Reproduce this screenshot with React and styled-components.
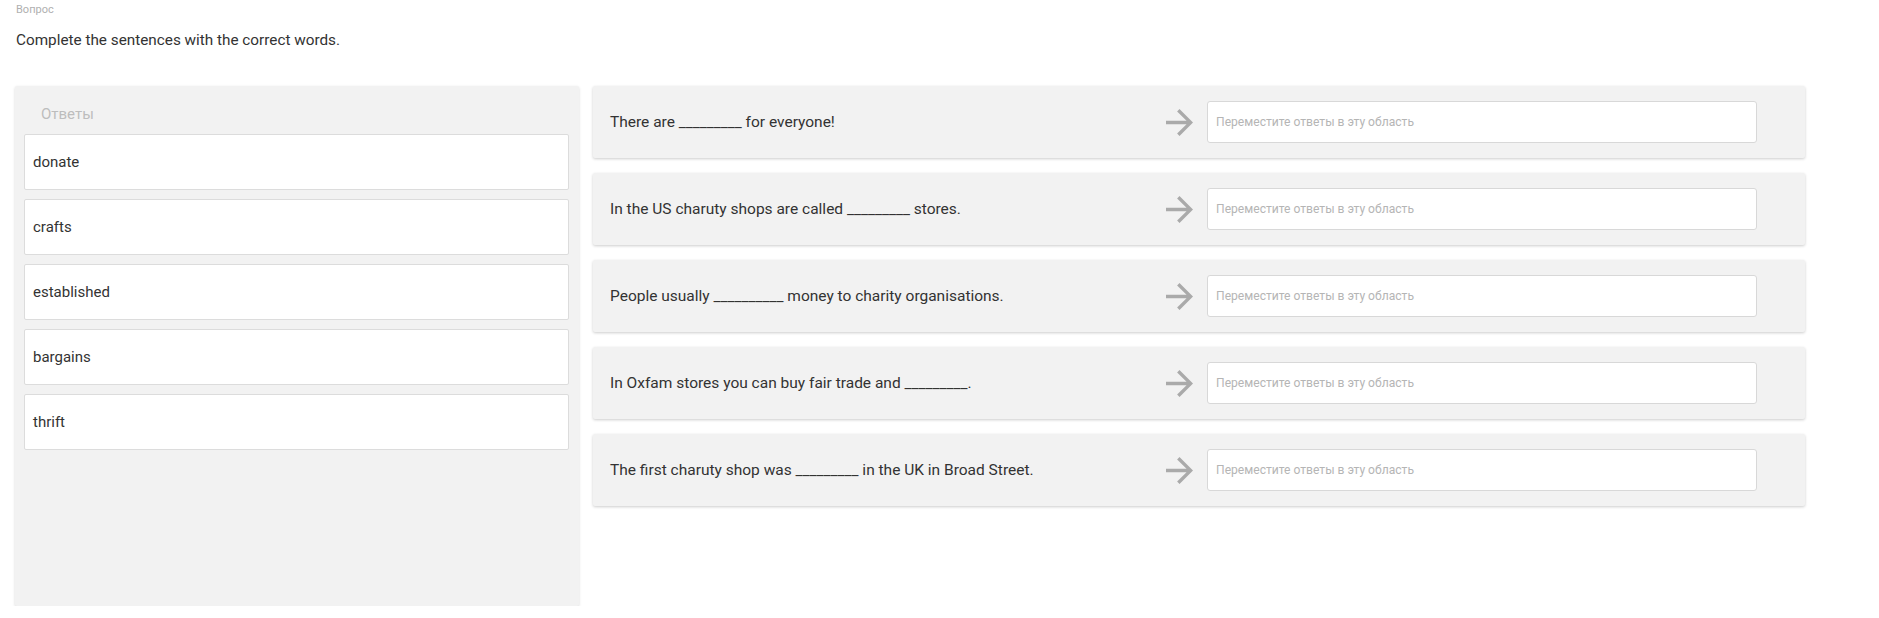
import React from "react";
import styled, { createGlobalStyle } from "styled-components";

const GlobalStyle = createGlobalStyle`
    html, body {
        margin: 0;
        padding: 0;
        background: #fff;
        font-family: Roboto, "Noto Sans", Arial, sans-serif;
        color: #333;
    }
`;

const Page = styled.div`
    padding: 1px 0 0 16px;
`;

const Label = styled.div`
    font-size: 11px;
    line-height: 18px;
    color: #b0b0b0;
`;

const Question = styled.div`
    margin-top: 11px;
    font-size: 15.3px;
    line-height: 20px;
    color: #333;
`;

const Board = styled.div`
    display: flex;
    align-items: flex-start;
    gap: 14px;
    margin-top: 36px;
    margin-left: -1px;
`;

const AnswersPanel = styled.div`
    width: 564px;
    height: 520px;
    background: #f2f2f2;
    border-radius: 2px;
    box-shadow: 0 1px 3px rgba(0, 0, 0, 0.16);
    display: flex;
    flex-direction: column;
    gap: 9px;
    padding: 0 10px 0 9px;
    box-sizing: border-box;
`;

const PanelTitle = styled.div`
    padding: 18px 0 1px 17px;
    font-size: 15px;
    line-height: 20px;
    color: #bdbdbd;
`;

const AnswerItem = styled.div`
    height: 56px;
    box-sizing: border-box;
    display: flex;
    align-items: center;
    padding-left: 8px;
    background: #fff;
    border: 1px solid #dcdcdc;
    border-radius: 2px;
    font-size: 15px;
    color: #333;
`;

const Rows = styled.div`
    display: flex;
    flex-direction: column;
    gap: 15px;
`;

const Row = styled.div`
    width: 1212px;
    height: 72px;
    box-sizing: border-box;
    display: flex;
    align-items: center;
    padding: 0 48px 0 17px;
    background: #f2f2f2;
    border-radius: 2px;
    box-shadow: 0 1px 3px rgba(0, 0, 0, 0.2);
`;

const Sentence = styled.div`
    flex: 1;
    font-size: 15.5px;
    color: #333;
`;

const Arrow = styled.svg`
    width: 27px;
    height: 27px;
    margin-right: 14px;
    fill: #aaaaaa;
    flex-shrink: 0;
`;

const DropZone = styled.div`
    width: 550px;
    height: 42px;
    box-sizing: border-box;
    display: flex;
    align-items: center;
    padding-left: 8px;
    background: #fff;
    border: 1px solid #d8d8d8;
    border-radius: 3px;
    font-size: 12.1px;
    color: #b5b5b5;
`;

const answers = ["donate", "crafts", "established", "bargains", "thrift"];

const sentences = [
    "There are _________ for everyone!",
    "In the US charuty shops are called _________ stores.",
    "People usually __________ money to charity organisations.",
    "In Oxfam stores you can buy fair trade and _________.",
    "The first charuty shop was _________ in the UK in Broad Street.",
];

const App = () => {
    return (
        <Page>
            <GlobalStyle />
            <Label>Вопрос</Label>
            <Question>Complete the sentences with the correct words.</Question>
            <Board>
                <AnswersPanel>
                    <PanelTitle>Ответы</PanelTitle>
                    {answers.map((a) => (
                        <AnswerItem key={a}>{a}</AnswerItem>
                    ))}
                </AnswersPanel>
                <Rows>
                    {sentences.map((s) => (
                        <Row key={s}>
                            <Sentence>{s}</Sentence>
                            <Arrow viewBox="4 4 16 16">
                                <path d="M12 4l-1.41 1.41L16.17 11H4v2h12.17l-5.58 5.59L12 20l8-8z" />
                            </Arrow>
                            <DropZone>Переместите ответы в эту область</DropZone>
                        </Row>
                    ))}
                </Rows>
            </Board>
        </Page>
    );
};

export default App;
